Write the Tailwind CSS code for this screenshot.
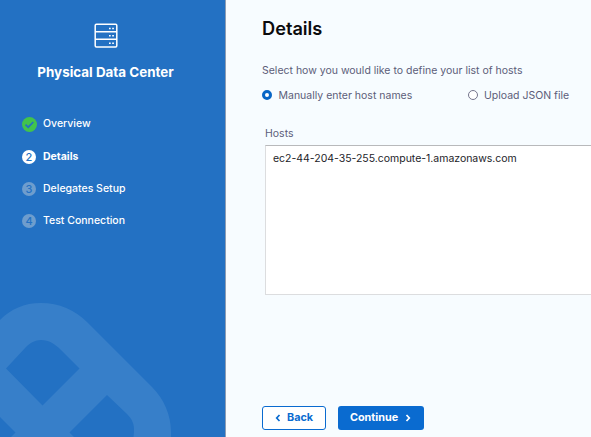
<!DOCTYPE html>
<html lang="en">
<head>
<meta charset="utf-8">
<title>Physical Data Center</title>
<script src="https://cdn.jsdelivr.net/npm/@tailwindcss/browser@4"></script>
</head>
<body class="flex h-[437px] w-[591px] overflow-hidden bg-[#f7fcff] font-['Inter',sans-serif] text-[10.500px] whitespace-nowrap">
<aside class="relative h-full w-[226px] shrink-0 overflow-hidden border-r border-[#8d9db4] bg-[#2371c3] text-white">
  <svg class="absolute bottom-0 left-0" width="225" height="147" viewBox="0 290 225 147" fill="#377fc9">
    <path fill-rule="evenodd" d="M0 320C11 309 24 303 41 303C59 303 75 310 87 322L152 387C164 399 171 415 171 432V437H133.500L134 432C134.500 424 132 419 127 414L107 395L69.500 432.500L74 437H11L15.500 432.500L0 417ZM6 368.500L42.500 405.500L79.500 368.500L61 350C55 344 49 340 41 340C35 340 30 343 26 347Z"/>
  </svg>
  <div class="relative flex flex-col items-center pr-[14px] pt-[23px]">
    <svg width="24" height="26" viewBox="0 0 24 26" fill="none" stroke="white" stroke-width="1.500">
      <rect x="1.200" y="1.200" width="21.600" height="22.800" rx="1.200"/>
      <path d="M1.200 8.700H22.800M1.200 16.200H22.800"/>
      <path stroke-width="1.500" stroke-dasharray="1.700 1.500" d="M15 5.400H20.200M15 12.700H20.200M15 20.200H20.200"/>
    </svg>
    <h2 class="mt-[14px] text-[13.400px] leading-[18px] font-bold">Physical Data Center</h2>
  </div>
  <ol class="relative mt-9 pl-[22px] font-medium">
    <li class="flex h-[33px] items-start">
      <svg width="15" height="15" viewBox="0 0 15 15"><circle cx="7.500" cy="7.500" r="7.500" fill="#42c34b"/><path d="M3.500 7.700L6.200 10.200L11.300 5" fill="none" stroke="#2371c3" stroke-width="1.700"/></svg>
      <span class="ml-[6px] leading-[14px]">Overview</span>
    </li>
    <li class="flex h-8 items-start font-bold">
      <span class="flex size-[14px] items-center justify-center rounded-full bg-white text-[11px] font-medium text-[#2371c3]">2</span>
      <span class="ml-[7px] leading-[14px]">Details</span>
    </li>
    <li class="flex h-8 items-start">
      <span class="flex size-[14px] items-center justify-center rounded-full bg-[#6e9dcd] text-[11px] text-[#2371c3]">3</span>
      <span class="ml-[7px] leading-[14px]">Delegates Setup</span>
    </li>
    <li class="flex h-8 items-start">
      <span class="flex size-[14px] items-center justify-center rounded-full bg-[#6e9dcd] text-[11px] text-[#2371c3]">4</span>
      <span class="ml-[7px] leading-[14px]">Test Connection</span>
    </li>
  </ol>
</aside>
<main class="flex-1 overflow-hidden pl-9 text-[#5c5d79]">
  <h1 class="mt-4 text-[18.200px] leading-6 font-semibold text-[#0b0b0d]">Details</h1>
  <p class="mt-6 leading-[14px]">Select how you would like to define your list of hosts</p>
  <div class="mt-[11px] flex h-[14px] items-start leading-[14px]">
    <label class="flex w-[206px] items-start"><span class="mt-px size-[10px] rounded-full border-[3px] border-[#0866c6] bg-white"></span><span class="ml-[6.500px]">Manually enter host names</span></label>
    <label class="flex items-start"><span class="mt-px size-[10px] rounded-full border-[1.500px] border-[#74758d] bg-white"></span><span class="ml-[6px]">Upload JSON file</span></label>
  </div>
  <div class="ml-[3px] mt-6">
    <label class="block leading-[14px]">Hosts</label>
    <div class="mt-1 h-[150px] border border-r-0 border-[#dcdddf] border-t-[#b8b9bb] bg-white pl-[7px] pt-[6px] leading-[14px] tracking-[-0.020px] text-[#1c1c28]">ec2-44-204-35-255.compute-1.amazonaws.com</div>
  </div>
  <div class="mt-[111px] flex gap-3 text-[10.800px] font-bold leading-[14px]">
    <button class="flex h-6 w-16 items-center rounded-[3px] border border-[#0a6bd0] bg-white pb-px pl-3 text-[#0a6bd0]"><svg class="mt-px" width="6" height="8" viewBox="0 0 6 8" fill="none" stroke="currentColor" stroke-width="1.700"><path d="M4.500 1L1.700 4L4.500 7"/></svg><span class="ml-[6px]">Back</span></button>
    <button class="flex h-6 w-[86px] items-center rounded-[3px] bg-[#0a6bd0] pb-px pl-3 text-white"><span>Continue</span><svg class="ml-[7px] mt-px" width="6" height="8" viewBox="0 0 6 8" fill="none" stroke="currentColor" stroke-width="1.700"><path d="M1.500 1L4.300 4L1.500 7"/></svg></button>
  </div>
</main>
</body>
</html>
